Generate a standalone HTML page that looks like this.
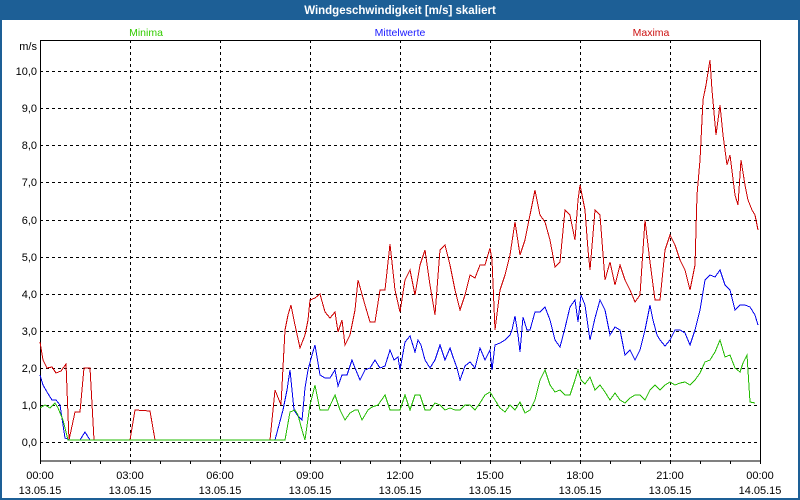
<!DOCTYPE html>
<html><head><meta charset="utf-8"><style>
html,body{margin:0;padding:0;width:800px;height:500px;overflow:hidden;background:#fff}
</style></head><body>
<svg width="800" height="500" xmlns="http://www.w3.org/2000/svg" font-family="Liberation Sans, sans-serif" font-size="11">
<rect x="0" y="0" width="800" height="500" fill="#1d5f96"/>
<rect x="2" y="20" width="796" height="478" fill="#fff"/>
<text x="400" y="14" fill="#fff" font-weight="bold" text-anchor="middle" font-size="11.5">Windgeschwindigkeit [m/s] skaliert</text>
<text x="146" y="36" fill="#33cc00" text-anchor="middle" font-size="10.5">Minima</text>
<text x="400" y="36" fill="#1a1aff" text-anchor="middle" font-size="10.5">Mittelwerte</text>
<text x="651" y="36" fill="#cc1111" text-anchor="middle" font-size="10.5">Maxima</text>
<g stroke="#000" stroke-dasharray="3,3" stroke-width="1">
<path d="M40 71.5H760M40 108.5H760M40 145.5H760M40 182.5H760M40 220.5H760M40 257.5H760M40 294.5H760M40 331.5H760M40 368.5H760M40 405.5H760M40 442.5H760"/>
<path d="M130.5 40V461M220.5 40V461M310.5 40V461M400.5 40V461M490.5 40V461M580.5 40V461M670.5 40V461"/>
</g>
<rect x="40.5" y="40.5" width="720" height="420.5" fill="none" stroke="#000"/>
<g stroke="#000"><path d="M40.5 461V464M70.5 461V464M100.5 461V464M130.5 461V464M160.5 461V464M190.5 461V464M220.5 461V464M250.5 461V464M280.5 461V464M310.5 461V464M340.5 461V464M370.5 461V464M400.5 461V464M430.5 461V464M460.5 461V464M490.5 461V464M520.5 461V464M550.5 461V464M580.5 461V464M610.5 461V464M640.5 461V464M670.5 461V464M700.5 461V464M730.5 461V464M760.5 461V464"/></g>
<g fill="#000" text-anchor="end">
<text x="37" y="50">m/s</text>
<text x="37" y="75">10,0</text><text x="37" y="112">9,0</text><text x="37" y="149">8,0</text><text x="37" y="186">7,0</text><text x="37" y="224">6,0</text><text x="37" y="261">5,0</text><text x="37" y="298">4,0</text><text x="37" y="335">3,0</text><text x="37" y="372">2,0</text><text x="37" y="409">1,0</text><text x="37" y="446">0,0</text>
</g>
<g fill="#000" text-anchor="middle">
<text x="40" y="479">00:00</text><text x="40" y="494">13.05.15</text>
<text x="130" y="479">03:00</text><text x="130" y="494">13.05.15</text>
<text x="220" y="479">06:00</text><text x="220" y="494">13.05.15</text>
<text x="310" y="479">09:00</text><text x="310" y="494">13.05.15</text>
<text x="400" y="479">12:00</text><text x="400" y="494">13.05.15</text>
<text x="490" y="479">15:00</text><text x="490" y="494">13.05.15</text>
<text x="580" y="479">18:00</text><text x="580" y="494">13.05.15</text>
<text x="670" y="479">21:00</text><text x="670" y="494">13.05.15</text>
<text x="760" y="479">00:00</text><text x="760" y="494">14.05.15</text>
</g>
<g shape-rendering="crispEdges">
<polyline fill="none" stroke="#cc0000" stroke-width="1" points="40,342 43,360 47,368 52,367 56,373 61,371 66,364 69,440 75,412 80,412 84,368 90,368 94,440 130,440 135,410 150,411 155,440 270,440 275,390 279,400 281,405 285,330 288,315 291,305 295,325 300,348 305,335 308,320 310,300 315,298 320,294 325,312 330,318 335,312 338,332 342,320 345,345 350,335 355,310 358,280 365,305 370,322 375,322 380,290 385,290 390,244 395,290 400,312 405,280 410,270 415,295 420,265 425,250 430,285 435,315 440,250 445,245 450,265 455,290 460,310 465,295 470,275 475,278 480,265 485,265 490,248 492,260 495,330 500,290 505,275 510,255 515,222 520,255 525,240 530,215 535,190 540,215 545,222 550,240 555,267 560,262 565,210 570,215 575,240 578,200 580,185 585,210 588,250 590,270 595,210 600,215 605,280 610,262 615,285 620,265 625,280 630,290 635,302 640,295 645,220 650,262 655,300 660,300 665,250 670,235 675,245 680,260 685,270 690,290 695,265 697,195 700,160 703,100 706,85 710,60 712,90 716,135 720,105 723,135 727,165 730,155 735,195 738,205 741,160 745,185 748,200 752,210 755,215 758,230"/>
<polyline fill="none" stroke="#0000ee" stroke-width="1" points="40,375 43,385 47,392 52,400 56,400 60,405 65,438 70,440 80,440 85,432 90,440 270,440 275,440 283,410 287,390 290,370 294,410 298,416 302,420 305,388 308,370 312,355 315,345 320,375 325,378 330,378 335,370 338,386 342,375 347,375 352,360 355,368 360,380 365,370 370,368 375,360 378,365 380,368 385,366 390,350 394,360 398,357 400,370 405,342 410,336 415,352 418,340 421,345 425,360 430,368 435,360 440,345 445,360 450,348 453,357 457,368 460,380 465,366 470,362 475,368 480,348 485,360 490,350 492,370 495,345 500,343 505,340 510,335 512,330 515,316 518,335 520,352 523,317 527,330 530,330 535,312 540,312 545,307 550,320 555,340 560,347 565,328 570,307 575,300 578,322 581,295 585,305 590,340 595,318 600,300 605,310 610,335 615,327 620,330 625,355 630,350 635,360 640,350 645,330 650,305 653,320 657,335 660,340 665,346 670,340 675,330 680,330 685,333 690,345 695,330 700,310 705,280 710,275 715,277 720,270 725,285 730,290 735,310 740,305 745,305 750,307 755,315 758,325"/>
<polyline fill="none" stroke="#22bb00" stroke-width="1" points="40,408 45,405 50,408 55,403 58,408 63,420 68,440 90,440 270,440 285,440 290,412 295,410 298,415 302,430 305,440 310,405 315,385 320,410 328,410 335,395 340,410 345,420 350,413 355,410 358,410 362,420 368,410 372,407 378,405 385,395 390,410 400,410 405,395 410,410 415,395 420,395 425,410 430,410 435,403 440,405 445,410 450,408 455,410 460,410 465,405 470,405 475,410 480,403 485,395 490,392 495,400 500,408 505,412 510,405 515,410 520,402 525,413 530,410 535,400 540,380 545,370 550,385 555,392 560,390 565,395 570,395 575,380 578,370 581,380 585,384 590,377 595,390 600,385 605,392 610,400 615,393 620,400 625,403 630,398 635,395 640,395 645,400 650,390 655,385 660,390 665,385 670,382 675,385 680,383 685,382 690,385 695,380 700,373 705,362 710,360 715,352 720,340 725,357 730,355 735,368 740,372 743,363 747,355 750,402 755,403"/>
</g>
</svg>
</body></html>
